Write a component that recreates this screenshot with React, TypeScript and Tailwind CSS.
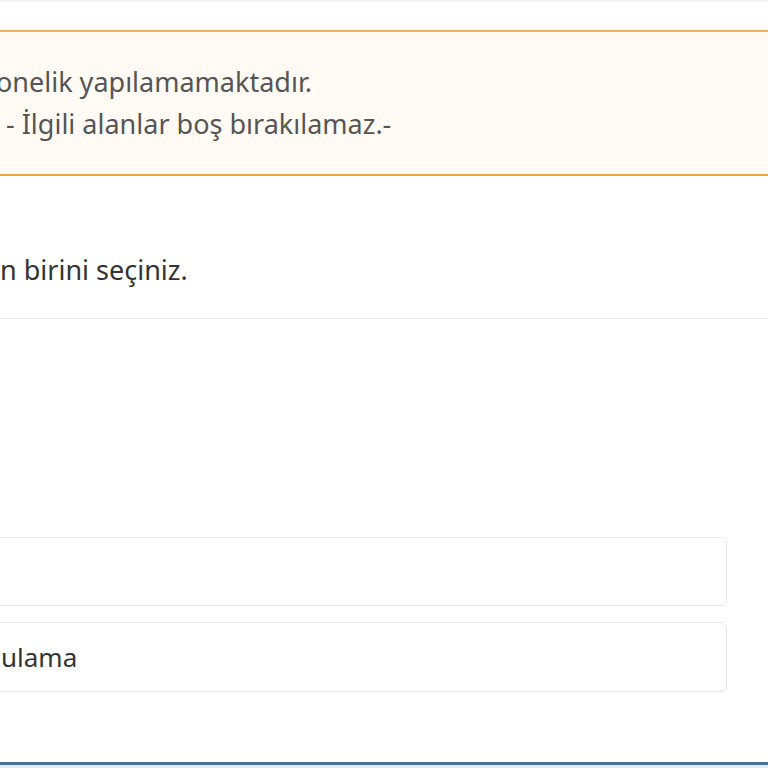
export default function App() {
  return (
    <div
      className="h-[768px] w-[768px] overflow-hidden border-t-2 border-[#f3f3f3] bg-white"
      style={{ fontFamily: '"Noto Sans", "Open Sans", sans-serif' }}
    >
      {/* Warning */}
      <div className="mt-[28px] h-[146px] overflow-hidden border-y-2 border-t-[#eab162] border-b-[#e8a936] bg-[#fffaf3] pt-[29px] text-[27px] leading-[42px] text-[#555]">
        <p className="-ml-[4px] whitespace-nowrap">onelik yapılamamaktadır.</p>
        <p className="pl-[6px] whitespace-nowrap">- İlgili alanlar boş bırakılamaz.-</p>
      </div>

      {/* Instruction */}
      <div className="mt-[78px] border-b border-[#ebebeb] pb-[32px] text-[27px] leading-[32px] text-[#333]">
        <p className="whitespace-nowrap">n birini seçiniz.</p>
      </div>

      {/* Options */}
      <div className="mt-[218px] flex w-[727px] flex-col gap-[16px]">
        <div className="-ml-[10px] h-[69px] rounded-md border border-[#e6e6e6] bg-white" />
        <div className="-ml-[10px] flex h-[70px] items-center rounded-md border border-[#e6e6e6] bg-white pl-[10px] text-[26px] text-[#333]">
          <span className="whitespace-nowrap">ulama</span>
        </div>
      </div>

      <div className="mt-[70px] h-[3px] bg-[#4f6f9c]" />
      <div className="h-[4px] bg-[#e4ecf4]" />
    </div>
  );
}
